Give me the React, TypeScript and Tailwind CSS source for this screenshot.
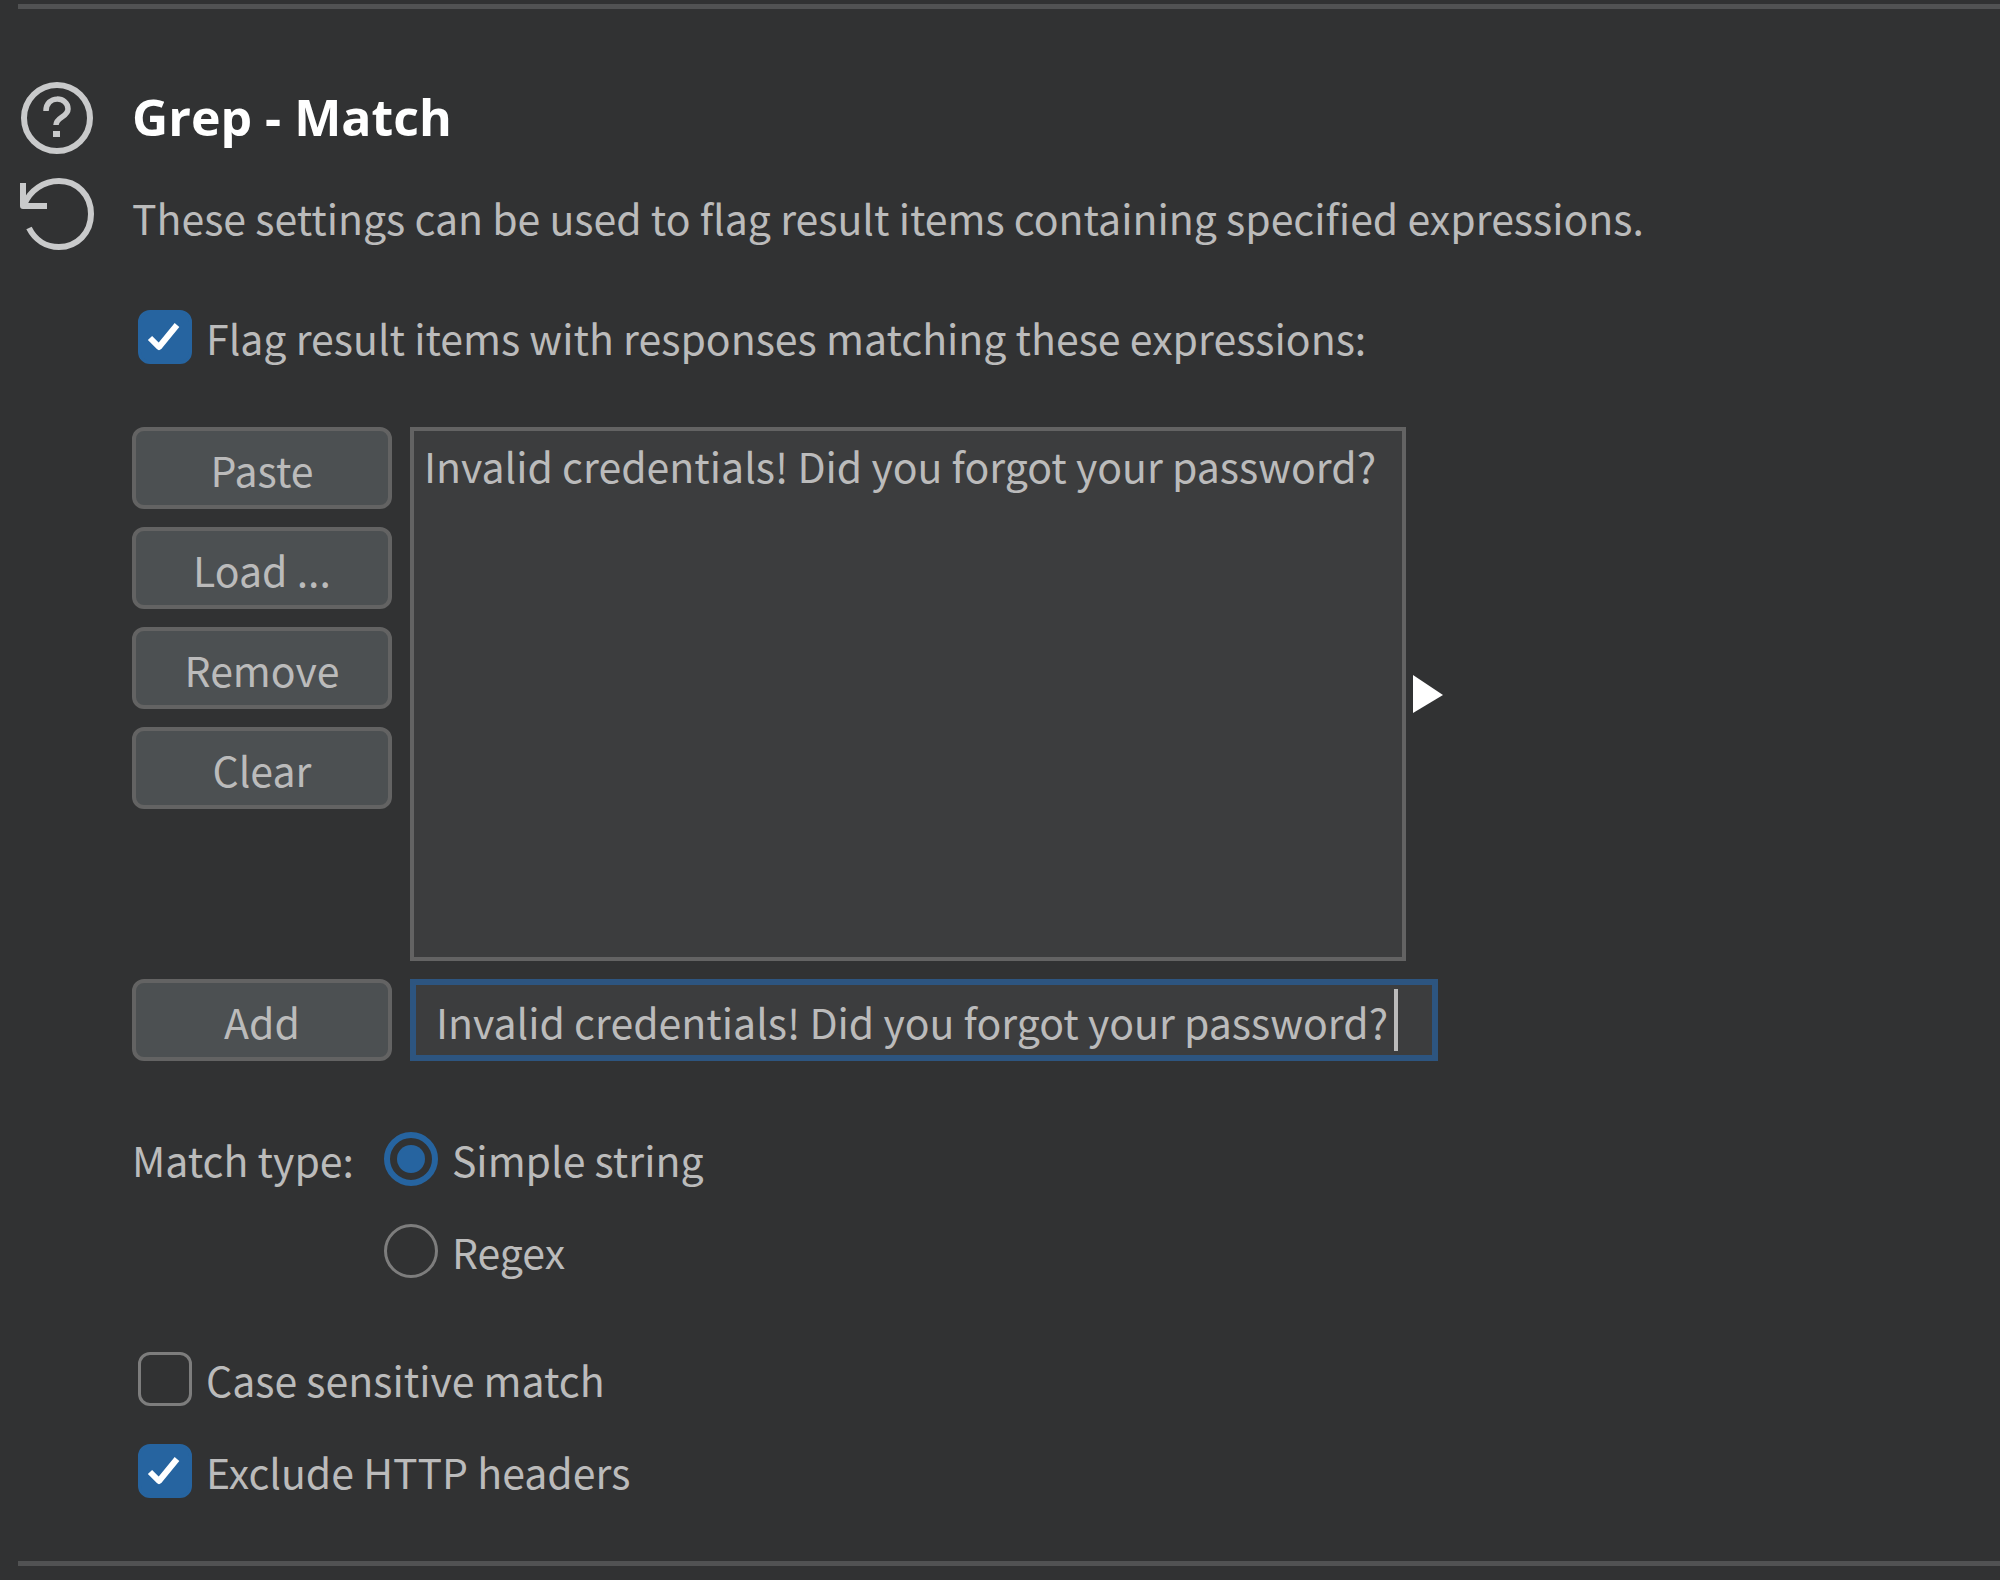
import { useState, type ReactNode } from "react";

const expression = "Invalid credentials! Did you forgot your password?";

function HelpIcon() {
  return (
    <svg viewBox="0 0 76 76" className="size-[76px]" fill="none" stroke="#c9cacb" aria-hidden="true">
      <circle cx="37" cy="39" r="33" strokeWidth="6" />
      <path d="M26 32 C26 16 48 17 48 30 C48 38 36 38 36 46" strokeWidth="5.5" />
      <rect x="33" y="52" width="7" height="6" fill="#c9cacb" stroke="none" />
    </svg>
  );
}

function ResetIcon() {
  return (
    <svg viewBox="0 0 76 76" className="size-[76px]" fill="none" stroke="#c9cacb" strokeWidth="6" strokeLinejoin="round" aria-hidden="true">
      <path d="M4 30 C10 15 24 6 39 6 C57 6 71 20 71 39 C71 58 57 72 39 72 C26 72 15 65 9 53" />
      <path d="M3 8 V31 H27" />
    </svg>
  );
}

function CheckBox({ label, initial }: { label: string; initial: boolean }) {
  const [on, setOn] = useState(initial);
  return (
    <label className="flex w-fit items-center gap-3.5">
      <span className="relative grid size-[54px] shrink-0">
        <input
          type="checkbox"
          checked={on}
          onChange={() => setOn(!on)}
          className="size-[54px] appearance-none rounded-xl border-[3px] border-[#7d7d7d] checked:border-[#2664a0] checked:bg-[#2664a0]"
        />
        {on && (
          <svg viewBox="0 0 54 54" className="pointer-events-none absolute inset-0" fill="none" stroke="#fff" strokeWidth="6" aria-hidden="true">
            <path d="M12 28 L21 37 L39 15" strokeLinejoin="round" />
          </svg>
        )}
      </span>
      <Caption>{label}</Caption>
    </label>
  );
}

function Radio({ label, checked, onSelect }: { label: string; checked: boolean; onSelect: () => void }) {
  return (
    <label className="flex w-fit items-center gap-3.5">
      <span className="relative grid size-[54px] shrink-0 place-items-center">
        <input
          type="radio"
          name="match-type"
          checked={checked}
          onChange={onSelect}
          className="size-[54px] appearance-none rounded-full border-[3px] border-[#7d7d7d] checked:border-[6px] checked:border-[#2664a0]"
        />
        {checked && <span className="pointer-events-none absolute size-7 rounded-full bg-[#2664a0]" />}
      </span>
      <Caption>{label}</Caption>
    </label>
  );
}

function Caption({ id, children }: { id?: string; children: ReactNode }) {
  return <span id={id} className="pt-0.5 pb-0.5 whitespace-nowrap">{children}</span>;
}

function Button({ children }: { children: ReactNode }) {
  return (
    <button
      type="button"
      className="h-[82px] w-full rounded-xl border-4 border-[#636363] bg-[#4c5052] pt-0.5 text-center"
    >
      {children}
    </button>
  );
}

export default function App() {
  const [type, setType] = useState("simple");
  const [text, setText] = useState(expression);

  return (
    <main className="min-h-screen bg-[#313233] pt-1 pl-[18px] font-['Noto_Sans_CJK_KR',sans-serif] text-[41px] leading-[60px] text-[#bbbbbb]">
      <section className="border-y-[5px] border-[#515253] pt-[70px] pb-[58px] pl-0.5">
        <div className="flex gap-9">
          <div className="flex flex-col gap-5">
            <button type="button" aria-label="Help"><HelpIcon /></button>
            <button type="button" aria-label="Restore defaults"><ResetIcon /></button>
          </div>
          <div className="flex min-w-0 flex-1 flex-col pt-2">
            <h2 className="font-['Open_Sans',sans-serif] text-[50px] font-bold leading-[60px] text-white">Grep - Match</h2>
            <p className="mt-10">These settings can be used to flag result items containing specified expressions.</p>

            <div className="mt-[58px] pl-1.5">
              <CheckBox label="Flag result items with responses matching these expressions:" initial />
            </div>

            <div className="mt-[58px] grid w-full max-w-[1306px] grid-cols-[260px_1fr] gap-[18px]">
              <div className="flex flex-col gap-[18px]">
                <Button>Paste</Button>
                <Button>Load ...</Button>
                <Button>Remove</Button>
                <Button>Clear</Button>
              </div>
              <div className="-mr-[5px] flex min-w-0 items-center gap-[7px]">
                <ul className="h-[534px] min-w-0 flex-1 border-4 border-[#636363] bg-[#3c3d3e] px-2.5 py-1">
                  <li className="whitespace-nowrap">{expression}</li>
                </ul>
                <svg viewBox="0 0 30 38" className="h-[38px] w-[30px] shrink-0" fill="#fff" aria-hidden="true">
                  <path d="M0 0 L30 20 L0 38 Z" />
                </svg>
              </div>
              <Button>Add</Button>
              <div className="relative">
                <input
                  type="text"
                  aria-label="Expression"
                  value={text}
                  onChange={(e) => setText(e.target.value)}
                  className="h-[82px] w-full border-[6px] border-[#2d5580] bg-[#3c3d3e] pt-0.5 pl-5 caret-transparent outline-none"
                />
                <span className="absolute top-2.5 right-10 h-[62px] w-1 bg-[#bbbbbb]" />
              </div>
            </div>

            <div role="radiogroup" aria-labelledby="match-type-label" className="mt-[66px] flex items-start gap-[30px]">
              <Caption id="match-type-label">Match type:</Caption>
              <div className="flex flex-col gap-7">
                <Radio label="Simple string" checked={type === "simple"} onSelect={() => setType("simple")} />
                <Radio label="Regex" checked={type === "regex"} onSelect={() => setType("regex")} />
              </div>
            </div>

            <div className="mt-16 flex flex-col gap-7 pl-1.5">
              <CheckBox label="Case sensitive match" initial={false} />
              <CheckBox label="Exclude HTTP headers" initial />
            </div>
          </div>
        </div>
      </section>
    </main>
  );
}
